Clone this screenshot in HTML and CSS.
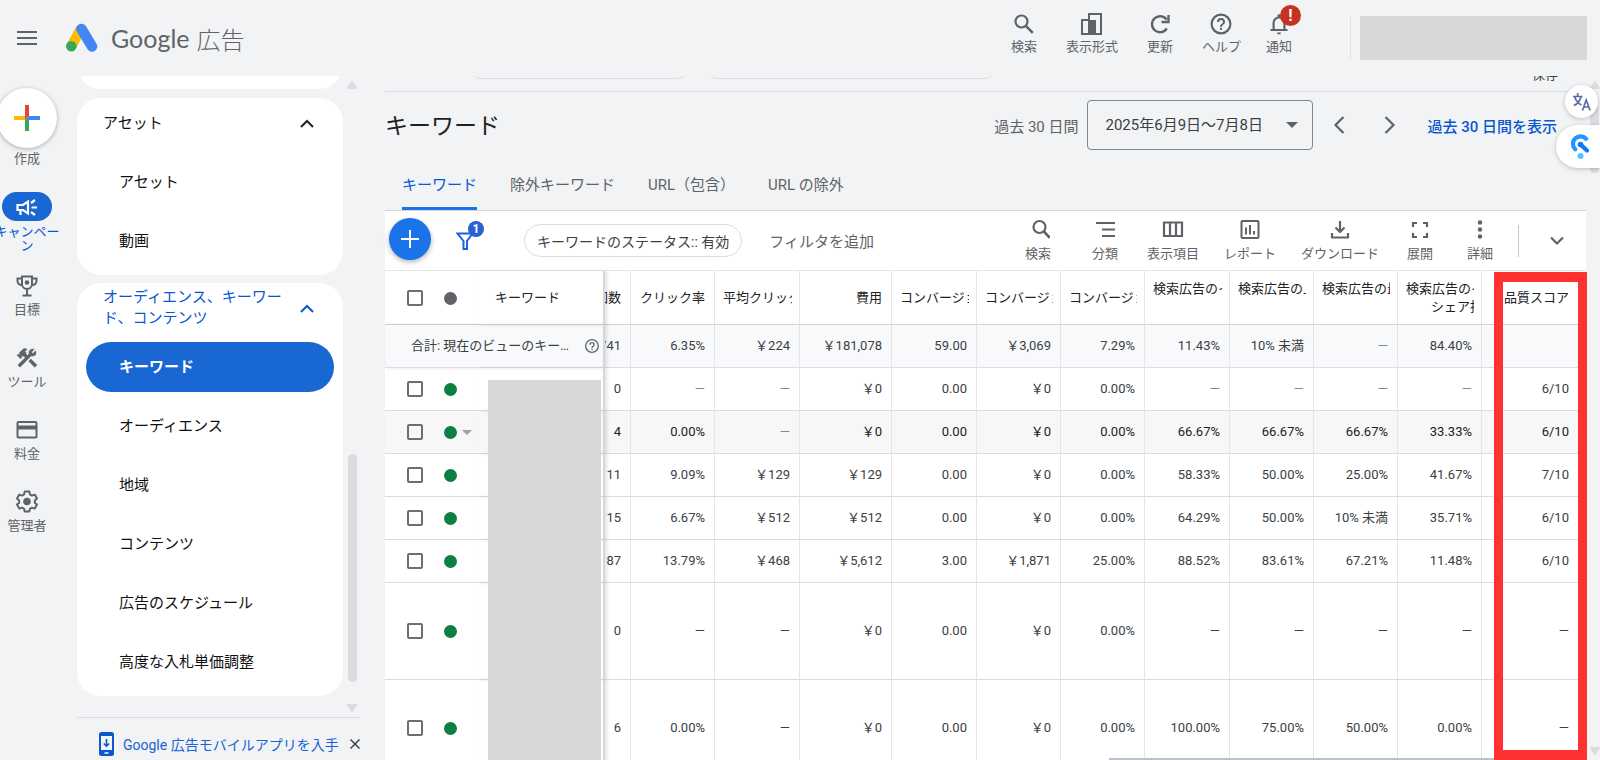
FILE: index.html
```
<!DOCTYPE html>
<html lang="ja">
<head>
<meta charset="utf-8">
<title>キーワード - Google 広告</title>
<link rel="stylesheet" href="styles.css">
</head>
<body>
<header class="topbar">
  <button class="icon-btn menu-btn" aria-label="メニュー"><svg width="20" height="14" viewBox="0 0 20 14"><path d="M0 1h20M0 7h20M0 13h20" stroke="#5f6368" stroke-width="2"/></svg></button>
  <a class="brand" href="#">
    <svg width="32" height="30" viewBox="0 0 32 30"><path d="M15 5.500 5.500 23" stroke="#fbbc04" stroke-width="10"/><path d="M15.500 6 26 23.500" stroke="#4285f4" stroke-width="10.500" stroke-linecap="round"/><circle cx="5.300" cy="23.300" r="5.300" fill="#34a853"/></svg>
    <span class="brand-name">Google</span><span class="brand-ads">広告</span>
  </a>
  <nav class="top-tools">
    <button class="tool"><svg width="24" height="24" viewBox="0 0 24 24"><circle cx="9.500" cy="9.500" r="6" fill="none" stroke="#5f6368" stroke-width="2.200"/><path d="m13.800 13.800 7 7" stroke="#5f6368" stroke-width="2.600"/></svg>検索</button>
    <button class="tool"><svg width="24" height="24" viewBox="0 0 24 24"><path d="M9 8V2h12v20H2V8z" fill="none" stroke="#5f6368" stroke-width="2"/><path d="M8 8h8v14H8z" fill="#5f6368"/></svg>表示形式</button>
    <button class="tool"><svg width="24" height="24" viewBox="0 0 24 24"><path d="M18.800 16.500A8 8 0 1 1 18.500 7.500M20.500 3v7h-7" fill="none" stroke="#5f6368" stroke-width="2.400"/></svg>更新</button>
    <button class="tool"><svg width="24" height="24" viewBox="0 0 24 24" fill="#5f6368"><path d="M11 18h2v-2h-2zM12 1.500a10.500 10.500 0 1 0 0 21 10.500 10.500 0 0 0 0-21m0 18.800a8.300 8.300 0 1 1 0-16.600 8.300 8.300 0 0 1 0 16.600M12 6a4 4 0 0 0-4 4h2a2 2 0 1 1 4 0c0 2-3 1.750-3 5h2c0-2.250 3-2.500 3-5a4 4 0 0 0-4-4"/></svg>ヘルプ</button>
    <button class="tool tool-bell"><svg width="24" height="24" viewBox="0 0 24 24" fill="#5f6368"><path d="M12 22.500a2 2 0 0 0 2-2h-4a2 2 0 0 0 2 2M18.500 17v-6c0-3.070-1.900-5.640-5-6.320V3.500a1.500 1.500 0 0 0-3 0v1.180c-3.100.680-5 3.250-5 6.320v6H3.500v2h17v-2zm-2.200 0H7.700v-6c0-2.480 1.810-4.500 4.300-4.500s4.300 2.020 4.300 4.500z"/></svg>通知<span class="alert-badge">!</span></button>
  </nav>
  <div class="account"></div>
</header>
<div class="body">
  <nav class="rail">
    <button class="create"><span class="create-circle"><svg width="26" height="26" viewBox="0 0 26 26"><path d="M11 0h4v11l-4 4z" fill="#ea4335"/><path d="M0 11h11v4H0z" fill="#fbbc04"/><path d="M11 15l4-4h11v4H15z" fill="#4285f4"/><path d="M11 15h4v11h-4z" fill="#34a853"/></svg></span>作成</button>
    <a class="rail-item rail-on" href="#"><span class="rail-pill"><svg width="24" height="22" viewBox="0 0 24 22" fill="none" stroke="#fff" stroke-width="2.200"><path d="M2.500 9v5H8l5 3.500v-12L8 9zM5.500 14v5M16.500 11.500H22M16 7l4-3M16 16l4 3"/></svg></span>キャンペーン</a>
    <a class="rail-item" href="#"><svg width="24" height="24" viewBox="0 0 24 24" fill="none" stroke="#5f6368" stroke-width="2"><path d="M7 2.500h10V10a5 5 0 0 1-10 0zM7 4.500H2.500V7A4 4 0 0 0 7 11M17 4.500h4.500V7a4 4 0 0 1-4.500 4M12 15v6M7.500 21.500h9"/><circle cx="12" cy="8.500" r="2.300" fill="#5f6368" stroke="none"/></svg>目標</a>
    <a class="rail-item" href="#"><svg width="24" height="24" viewBox="0 0 24 24" fill="#5f6368"><path d="m13.780 15.170 2.120-2.120 6 6-2.120 2.120zM17.500 10a3.500 3.500 0 0 0 3.500-3.500c0-.580-.160-1.120-.410-1.600l-2.700 2.700-1.490-1.490 2.700-2.700A3.500 3.500 0 0 0 14 6.500c0 .410.080.800.210 1.160l-1.850 1.850-1.780-1.780.710-.710-1.410-1.410L12 3.490a3 3 0 0 0-4.240 0L4.220 7.030l1.410 1.410H2.810L2.100 9.150l3.540 3.540.710-.710V9.150l1.410 1.410.710-.710 1.780 1.780-7.410 7.410 2.120 2.120L16.340 9.790c.360.130.750.210 1.160.210" stroke="#5f6368" stroke-width=".6"/></svg>ツール</a>
    <a class="rail-item" href="#"><svg width="24" height="24" viewBox="0 0 24 24"><rect x="2.500" y="4" width="19" height="15.500" rx="1" fill="none" stroke="#5f6368" stroke-width="2"/><path d="M2 7.500h20v4H2z" fill="#5f6368"/></svg>料金</a>
    <a class="rail-item" href="#"><svg width="24" height="24" viewBox="0 0 24 24"><path d="M9.700 1.500h4.600l.6 2.900 2 1.200 2.800-1 2.300 4-2.200 1.900v2.200l2.200 1.900-2.300 4-2.800-1-2 1.200-.6 2.700H9.700l-.6-2.700-2-1.200-2.800 1-2.300-4 2.200-1.900v-2.200L2 8.600l2.300-4 2.800 1 2-1.200z" fill="none" stroke="#5f6368" stroke-width="2" stroke-linejoin="round"/><circle cx="12" cy="11.500" r="3.800" fill="#5f6368"/></svg>管理者</a>
  </nav>
  <div class="side">
    <div class="side-scroll">
      <div class="cards">
        <div class="card card-prev"></div>
        <section class="card">
          <button class="card-head">アセット<svg width="14" height="9" viewBox="0 0 14 9"><path d="m1 8 6-6 6 6" fill="none" stroke="#202124" stroke-width="2"/></svg></button>
          <a class="item" href="#">アセット</a>
          <a class="item" href="#">動画</a>
        </section>
        <section class="card">
          <button class="card-head head-on"><span>オーディエンス、キーワード、コンテンツ</span><svg width="14" height="9" viewBox="0 0 14 9"><path d="m1 8 6-6 6 6" fill="none" stroke="#0b57d0" stroke-width="2"/></svg></button>
          <a class="item item-on" href="#">キーワード</a>
          <a class="item" href="#">オーディエンス</a>
          <a class="item" href="#">地域</a>
          <a class="item" href="#">コンテンツ</a>
          <a class="item" href="#">広告のスケジュール</a>
          <a class="item" href="#">高度な入札単価調整</a>
        </section>
      </div>
      <div class="bar"><svg width="10" height="8" viewBox="0 0 10 8"><path d="M5 1 9 7H1z" fill="#dadce0" stroke="#dadce0" stroke-width="2" stroke-linejoin="round"/></svg><span class="thumb"></span><svg width="10" height="8" viewBox="0 0 10 8"><path d="M5 7 9 1H1z" fill="#dadce0" stroke="#dadce0" stroke-width="2" stroke-linejoin="round"/></svg></div>
    </div>
    <div class="promo">
      <svg width="15" height="24" viewBox="0 0 15 24"><rect width="15" height="24" rx="2.500" fill="#0b57d0"/><path d="M2 4h11v14H2z" fill="#f1f3f4"/><path d="M7.500 7v7M4.800 11.500l2.700 2.700 2.700-2.700" fill="none" stroke="#0b57d0" stroke-width="1.600"/><path d="M5.500 21h4" stroke="#fff" stroke-width="1.500"/></svg>
      <a href="#">Google 広告モバイルアプリを入手</a>
      <button class="icon-btn" aria-label="閉じる"><svg width="10" height="10" viewBox="0 0 10 10"><path d="m.5.5 9 9m0-9-9 9" stroke="#3c4043" stroke-width="1.500"/></svg></button>
    </div>
  </div>
  <main class="main">
    <div class="strip"><span class="ghost ghost-a"></span><span class="ghost ghost-b"></span><a class="save" href="#">保存</a></div>
    <div class="title-row">
      <h1>キーワード</h1>
      <label class="period" for="range">過去 30 日間</label>
      <div class="range"><select id="range"><option>2025年6月9日～7月8日</option></select><svg width="12" height="6" viewBox="0 0 12 6"><path d="M0 0h12L6 6z" fill="#5f6368"/></svg></div>
      <button class="icon-btn step" aria-label="前へ"><svg width="12" height="18" viewBox="0 0 12 18"><path d="M10.500 1 2.500 9l8 8" fill="none" stroke="#5f6368" stroke-width="2.200"/></svg></button>
      <button class="icon-btn step step-next" aria-label="次へ"><svg width="12" height="18" viewBox="0 0 12 18"><path d="m1.500 1 8 8-8 8" fill="none" stroke="#5f6368" stroke-width="2.200"/></svg></button>
      <a class="show" href="#">過去 30 日間を表示</a>
    </div>
    <nav class="tabs"><a class="tab tab-on" href="#">キーワード</a><a class="tab" href="#">除外キーワード</a><a class="tab" href="#">URL（包含）</a><a class="tab" href="#">URL の除外</a></nav>
    <div class="toolbar">
      <button class="fab" aria-label="追加"><svg width="18" height="18" viewBox="0 0 18 18"><path d="M9 0v18M0 9h18" stroke="#fff" stroke-width="2"/></svg></button>
      <button class="filter" aria-label="フィルタ"><svg width="18" height="18" viewBox="0 0 18 18"><path d="M1.500 1.500h15L11 9v8H7.500V9z" fill="none" stroke="#1a62e0" stroke-width="2"/></svg><span class="count">1</span></button>
      <button class="chip">キーワードのステータス:: 有効</button>
      <button class="add-filter">フィルタを追加</button>
      <div class="table-tools">
        <button class="tool tool-search"><svg width="24" height="24" viewBox="0 0 24 24"><circle cx="13.500" cy="9" r="6" fill="none" stroke="#5f6368" stroke-width="2.200"/><path d="m17.800 13.400 6 6.400" stroke="#5f6368" stroke-width="2.600"/></svg>検索</button>
        <button class="tool tool-segment"><svg width="24" height="24" viewBox="0 0 24 24"><path d="M3 5h19M9 11.500h13M9 18h13" stroke="#5f6368" stroke-width="2"/></svg>分類</button>
        <button class="tool"><svg width="24" height="24" viewBox="0 0 24 24"><path d="M3 4.500h18v13.500H3zM9 4v14M15 4v14" fill="none" stroke="#5f6368" stroke-width="2.200"/></svg>表示項目</button>
        <button class="tool"><svg width="24" height="24" viewBox="0 0 24 24"><rect x="3.500" y="3" width="17" height="17" rx="1" fill="none" stroke="#5f6368" stroke-width="2"/><path d="M8 9.500v7M12 7v9.500M16 13v3.500" stroke="#5f6368" stroke-width="2"/></svg>レポート</button>
        <button class="tool"><svg width="24" height="24" viewBox="0 0 24 24"><path d="M12 3v11M7.500 9.500 12 14l4.500-4.500M4 15v4.500h16V15" fill="none" stroke="#5f6368" stroke-width="2.200"/></svg>ダウンロード</button>
        <button class="tool tool-expand"><svg width="24" height="24" viewBox="0 0 24 24"><path d="M5 9V5h4M15 5h4v4M19 15v4h-4M9 19H5v-4" fill="none" stroke="#5f6368" stroke-width="2.200"/></svg>展開</button>
        <button class="tool tool-more"><svg width="24" height="24" viewBox="0 0 24 24" fill="#5f6368"><circle cx="12" cy="4.500" r="2.200"/><circle cx="12" cy="11.500" r="2.200"/><circle cx="12" cy="18.500" r="2.200"/></svg>詳細</button>
      </div>
      <span class="rule"></span>
      <button class="icon-btn collapse" aria-label="折りたたむ"><svg width="14" height="10" viewBox="0 0 14 10"><path d="m1 1.500 6 6 6-6" fill="none" stroke="#5f6368" stroke-width="2.200"/></svg></button>
    </div>
    <div class="grid">
      <table>
        <colgroup><col class="w44"><col class="w50"><col class="w126"><col class="w26"><col class="w84"><col class="w85"><col class="w92"><col class="w85"><col class="w84"><col class="w84"><col class="w85"><col class="w84"><col class="w84"><col class="w84"><col></colgroup>
        <thead>
          <tr>
            <th class="box"><input type="checkbox" aria-label="すべて選択"></th><th class="state"><i class="dot dot-gray"></i></th><th class="kw">キーワード</th>
            <th class="n cut"><div>回数</div></th><th class="n">クリック率</th><th class="n"><div class="clip">平均クリック</div></th><th class="n">費用</th>
            <th class="n"><div class="clip">コンバージョン</div></th><th class="n"><div class="clip">コンバージョン</div></th><th class="n"><div class="clip">コンバージョン</div></th>
            <th class="n two"><div class="clip">検索広告のイ</div></th><th class="n two"><div class="clip">検索広告の上</div></th><th class="n two"><div class="clip">検索広告の最</div></th><th class="n two"><div class="clip">検索広告のイ<div class="second">シェア損</div></div></th><th class="n">品質スコア</th>
          </tr>
        </thead>
        <tbody>
          <tr class="total"><td class="kw sum" colspan="3"><div><span>合計: 現在のビューのキー…</span><svg width="16" height="16" viewBox="0 0 24 24" fill="#5f6368"><path d="M11 18h2v-2h-2zM12 1.500a10.500 10.500 0 1 0 0 21 10.500 10.500 0 0 0 0-21m0 19a8.500 8.500 0 1 1 0-17 8.500 8.500 0 0 1 0 17M12 6a4 4 0 0 0-4 4h2a2 2 0 1 1 4 0c0 2-3 1.750-3 5h2c0-2.250 3-2.500 3-5a4 4 0 0 0-4-4"/></svg></div></td><td class="n cut"><div>741</div></td><td class="n">6.35%</td><td class="n">￥224</td><td class="n">￥181,078</td><td class="n">59.00</td><td class="n">￥3,069</td><td class="n">7.29%</td><td class="n">11.43%</td><td class="n">10% 未満</td><td class="n no">—</td><td class="n">84.40%</td><td class="n"></td></tr>
          <tr><td class="box"><input type="checkbox" aria-label="行を選択"></td><td class="state"><i class="dot"></i></td><td class="kw"></td><td class="n cut"><div>0</div></td><td class="n no">—</td><td class="n no">—</td><td class="n">￥0</td><td class="n">0.00</td><td class="n">￥0</td><td class="n">0.00%</td><td class="n no">—</td><td class="n no">—</td><td class="n no">—</td><td class="n no">—</td><td class="n">6/10</td></tr>
          <tr class="hover"><td class="box"><input type="checkbox" aria-label="行を選択"></td><td class="state"><i class="dot"></i><svg class="caret" width="10" height="5" viewBox="0 0 10 5"><path d="M0 0h10L5 5z" fill="#9aa0a6"/></svg></td><td class="kw"></td><td class="n cut"><div>4</div></td><td class="n">0.00%</td><td class="n no">—</td><td class="n">￥0</td><td class="n">0.00</td><td class="n">￥0</td><td class="n">0.00%</td><td class="n">66.67%</td><td class="n">66.67%</td><td class="n">66.67%</td><td class="n">33.33%</td><td class="n">6/10</td></tr>
          <tr><td class="box"><input type="checkbox" aria-label="行を選択"></td><td class="state"><i class="dot"></i></td><td class="kw"></td><td class="n cut"><div>11</div></td><td class="n">9.09%</td><td class="n">￥129</td><td class="n">￥129</td><td class="n">0.00</td><td class="n">￥0</td><td class="n">0.00%</td><td class="n">58.33%</td><td class="n">50.00%</td><td class="n">25.00%</td><td class="n">41.67%</td><td class="n">7/10</td></tr>
          <tr><td class="box"><input type="checkbox" aria-label="行を選択"></td><td class="state"><i class="dot"></i></td><td class="kw"></td><td class="n cut"><div>15</div></td><td class="n">6.67%</td><td class="n">￥512</td><td class="n">￥512</td><td class="n">0.00</td><td class="n">￥0</td><td class="n">0.00%</td><td class="n">64.29%</td><td class="n">50.00%</td><td class="n">10% 未満</td><td class="n">35.71%</td><td class="n">6/10</td></tr>
          <tr><td class="box"><input type="checkbox" aria-label="行を選択"></td><td class="state"><i class="dot"></i></td><td class="kw"></td><td class="n cut"><div>87</div></td><td class="n">13.79%</td><td class="n">￥468</td><td class="n">￥5,612</td><td class="n">3.00</td><td class="n">￥1,871</td><td class="n">25.00%</td><td class="n">88.52%</td><td class="n">83.61%</td><td class="n">67.21%</td><td class="n">11.48%</td><td class="n">6/10</td></tr>
          <tr class="tall"><td class="box"><input type="checkbox" aria-label="行を選択"></td><td class="state"><i class="dot"></i></td><td class="kw"></td><td class="n cut"><div>0</div></td><td class="n">—</td><td class="n">—</td><td class="n">￥0</td><td class="n">0.00</td><td class="n">￥0</td><td class="n">0.00%</td><td class="n">—</td><td class="n">—</td><td class="n">—</td><td class="n">—</td><td class="n">—</td></tr>
          <tr class="tall"><td class="box"><input type="checkbox" aria-label="行を選択"></td><td class="state"><i class="dot"></i></td><td class="kw"></td><td class="n cut"><div>6</div></td><td class="n">0.00%</td><td class="n">—</td><td class="n">￥0</td><td class="n">0.00</td><td class="n">￥0</td><td class="n">0.00%</td><td class="n">100.00%</td><td class="n">75.00%</td><td class="n">50.00%</td><td class="n">0.00%</td><td class="n">—</td></tr>
        </tbody>
      </table>
      <div class="mask"></div>
      <div class="hbar"></div>
      <div class="highlight"></div>
    </div>
  </main>
  <div class="bar page-bar"><svg width="10" height="8" viewBox="0 0 10 8"><path d="M5 1 9 7H1z" fill="#dadce0" stroke="#dadce0" stroke-width="2" stroke-linejoin="round"/></svg><span class="thumb"></span><svg width="10" height="8" viewBox="0 0 10 8"><path d="M5 7 9 1H1z" fill="#dadce0" stroke="#dadce0" stroke-width="2" stroke-linejoin="round"/></svg></div>
</div>
<div class="floaters">
  <button class="translate" aria-label="翻訳"><svg width="18" height="18" viewBox="0 0 18 18" fill="none" stroke="#5c6bab" stroke-width="1.700"><path d="M0 3.500h9.500M4.700 0v3.500M7.800 4C7 8 4.500 11 .8 12.500M1.800 4c1 3.500 3.500 6.500 6.700 8M9.500 17.500l3.700-10.500 4 10.500M10.800 14h5"/></svg></button>
  <button class="assist" aria-label="アシスタント"><svg width="20" height="26" viewBox="0 0 20 26"><path d="M16 4.800A7.500 7.500 0 0 0 3 10c0 2.200.8 4 2.200 5.300" fill="none" stroke="#2196ff" stroke-width="4.200" stroke-linecap="round"/><path d="M11 11 17 16.500" stroke="#1473ff" stroke-width="4.200" stroke-linecap="round"/><circle cx="10.500" cy="10.500" r="2.800" fill="#1473ff"/><circle cx="10.500" cy="22" r="3" fill="#4fc3ff"/></svg></button>
</div>
</body>
</html>
```
FILE: styles.css
```
* { box-sizing: border-box; }
body {
  margin: 0;
  height: 100vh;
  display: flex;
  flex-direction: column;
  overflow: hidden;
  background: #f1f3f4;
  color: #3c4043;
  font-family: Roboto, "Noto Sans CJK JP", sans-serif;
  font-size: 13px;
}
button { margin: 0; padding: 0; border: 0; background: none; font: inherit; color: inherit; cursor: pointer; }
a { color: inherit; text-decoration: none; }
svg { flex: none; display: block; }
.icon-btn { display: flex; align-items: center; justify-content: center; }

/* top bar */
.topbar { flex: none; height: 76px; display: flex; align-items: center; padding: 0 13px 0 17px; }
.menu-btn { width: 20px; }
.brand { display: flex; align-items: center; margin-left: 29px; color: #5f6368; }
.brand-name { margin-left: 13px; font-family: Lato, sans-serif; font-size: 25px; }
.brand-ads { margin-left: 7px; font-size: 24px; font-weight: 300; }
.top-tools { margin-left: auto; display: flex; gap: 29px; align-self: flex-start; padding-top: 12px; }
.tool { position: relative; display: flex; flex-direction: column; align-items: center; gap: 1px; line-height: 20px; color: #5f6368; white-space: nowrap; }
.top-tools .tool-bell { margin-left: -4px; }
.alert-badge {
  position: absolute; left: 14px; top: -7px; width: 21px; height: 21px; border-radius: 50%;
  background: #c5321f; color: #fff; font-size: 16px; font-weight: 700; line-height: 21px; text-align: center;
}
.account { width: 227px; height: 44px; margin-left: 68px; background: #d8d8d8; box-shadow: -9px 0 0 #f1f3f4, -10px 0 0 #e3e5e7; }

/* left rail */
.body { flex: 1; min-height: 0; display: flex; }
.rail { flex: none; width: 68px; margin-left: -7px; margin-right: 16px; padding-top: 12px; display: flex; flex-direction: column; align-items: center; color: #5f6368; }
.create { display: flex; flex-direction: column; align-items: center; gap: 1px; line-height: 20px; }
.create-circle { width: 60px; height: 60px; border-radius: 50%; background: #fff; display: flex; align-items: center; justify-content: center; box-shadow: 0 1px 4px rgba(60, 64, 67, .4); }
.rail-item { width: 68px; height: 72px; display: flex; flex-direction: column; align-items: center; gap: 2px; line-height: 20px; text-align: center; }
.rail-on { height: 82px; margin-top: 23px; gap: 4px; line-height: 14px; color: #0b57d0; }
.rail-pill { width: 50px; height: 29px; border-radius: 15px; background: #1967d2; display: flex; align-items: center; justify-content: center; }

/* side navigation */
.side { flex: none; width: 308px; display: flex; flex-direction: column; color: #111; font-size: 15px; }
.side-scroll { flex: 1; min-height: 0; overflow: hidden; display: flex; gap: 3px; width: 283px; border-bottom: 1px solid #dadce0; }
.cards { flex: none; width: 266px; display: flex; flex-direction: column; gap: 8px; }
.card { flex: none; background: #fff; border-radius: 24px; padding: 0 9px 9px; }
.card-prev { height: 50px; margin: -37px 0 1px; }
.card-head { width: 100%; height: 50px; padding: 0 20px 0 17px; display: flex; align-items: center; justify-content: space-between; text-align: left; line-height: 21px; }
.card-head span { width: 182px; }
.head-on { color: #0b57d0; }
.item { display: flex; align-items: center; height: 50px; margin-top: 9px; padding: 0 0 3px 33px; border-radius: 25px; }
.item-on { background: #1967d2; color: #fff; font-weight: 700; }
.bar { width: 12px; padding: 5px 0 5px; display: flex; flex-direction: column; align-items: center; }
.bar .thumb { width: 9px; height: 228px; margin: auto 0 22px; border-radius: 5px; background: #dadce0; }
.promo { flex: none; height: 42px; width: 283px; padding: 9px 0 0 22px; display: flex; align-items: center; color: #1a62d6; font-size: 14px; }
.promo a { margin-left: 9px; white-space: nowrap; }
.promo .icon-btn { margin-left: auto; }

/* page heading */
.main { flex: 1; min-width: 0; display: flex; flex-direction: column; }
.strip { flex: none; height: 16px; overflow: hidden; display: flex; border-bottom: 1px solid #dadce0; }
.ghost { height: 32px; margin-top: -29px; border: 1px solid #dadce0; border-radius: 12px; }
.ghost-a { width: 220px; margin-left: 84px; }
.ghost-b { width: 290px; margin-left: 17px; }
.save { margin: -11px 28px 0 auto; line-height: 20px; }
.title-row { flex: none; height: 68px; display: flex; align-items: center; padding: 0 29px 2px 0; font-size: 15px; }
h1 { margin: 0 auto 3px 0; color: #202124; font-size: 23px; font-weight: 400; }
.period { color: #5f6368; }
.range { display: grid; align-items: center; width: 226px; margin-left: 9px; }
.range select { grid-area: 1 / 1; height: 50px; padding: 0 17px; appearance: none; border: 1px solid #80868b; border-radius: 4px; background: none; color: #3c4043; font: inherit; }
.range svg { grid-area: 1 / 1; justify-self: end; margin-right: 15px; pointer-events: none; }
.step { width: 24px; height: 24px; margin-left: 14px; }
.step-next { margin-left: 27px; }
.show { margin-left: 25px; color: #0b57d0; font-weight: 500; }
.tabs { flex: none; height: 51px; display: flex; gap: 33px; padding-left: 17px; border-bottom: 1px solid #d3d5d9; color: #5f6368; font-size: 15px; line-height: 50px; }
.tab-on { color: #0b57d0; box-shadow: inset 0 -3px 0 #1a73e8; }

/* toolbar */
.toolbar { flex: none; height: 60px; display: flex; align-items: center; padding: 0 22px 0 4px; background: #fff; border-bottom: 1px solid #e3e5e8; color: #5f6368; }
.fab { width: 42px; height: 42px; margin-bottom: 3px; border-radius: 50%; background: #1a73e8; display: flex; align-items: center; justify-content: center; box-shadow: 0 2px 5px rgba(60, 64, 67, .4); }
.filter { position: relative; width: 18px; margin-left: 25px; }
.count { position: absolute; left: 12px; top: -11px; width: 16px; height: 16px; border-radius: 50%; background: #2a62d4; color: #fff; font-size: 12px; font-weight: 700; line-height: 16px; text-align: center; }
.chip { height: 33px; margin-left: 50px; padding: 0 12px; border: 1px solid #dadce0; border-radius: 17px; font-size: 14px; color: #3c4043; white-space: nowrap; }
.add-filter { margin-left: 27px; font-size: 15px; white-space: nowrap; }
.table-tools { margin-left: auto; display: flex; gap: 25px; }
.table-tools .tool { gap: 2px; }
.tool-search { margin-right: 16px; }
.tool-segment { margin-right: 4px; }
.tool-expand { margin: 0 9px 0 3px; }
.rule { width: 1px; height: 32px; margin-left: 25px; background: #c4c7cb; }
.collapse { width: 14px; margin-left: 31px; }

/* keyword table */
.grid { position: relative; flex: 1; min-height: 0; background: #fff; }
.grid table { width: 100%; table-layout: fixed; border-collapse: separate; border-spacing: 0; }
.w26 { width: 26px; }
.w44 { width: 44px; }
.w50 { width: 50px; }
.w84 { width: 84px; }
.w85 { width: 85px; }
.w92 { width: 92px; }
.w126 { width: 126px; }
th, td { height: 43px; padding: 0; border-bottom: 1px solid #dadce0; font-weight: 400; line-height: 18px; white-space: nowrap; }
th { height: 54px; color: #202124; border-bottom-color: #cfd2d6; }
.tall td { height: 97px; }
.n { padding: 0 9px 0 8px; text-align: right; border-right: 1px solid #e3e5e8; }
.n:last-child { padding-right: 17px; border-right: 0; }
.no { color: #80868b; }
.cut { padding-left: 0; }
.cut div { display: flex; justify-content: flex-end; overflow: hidden; }
.clip { margin-right: -2px; overflow: hidden; text-align: left; }
.two { vertical-align: top; padding-top: 9px; }
.second { padding-left: 25px; }
.box { padding-left: 22px; text-align: left; }
.box input { display: block; width: 16px; height: 16px; margin: 0; appearance: none; border: 2px solid #6b6f73; border-radius: 2px; }
.state { padding-left: 15px; text-align: left; }
.dot { display: inline-block; width: 13px; height: 13px; border-radius: 50%; background: #0b8043; vertical-align: middle; }
.dot-gray { background: #5f6368; }
.caret { display: inline-block; margin-left: 5px; vertical-align: middle; }
.kw { position: relative; padding-left: 16px; text-align: left; border-right: 2px solid #d5d7da; box-shadow: 2px 0 3px rgba(60, 64, 67, .15); }
.sum { padding: 0 3px 0 26px; }
.sum div { display: flex; align-items: center; justify-content: space-between; }
.total { background: #f8f9fb; }
.hover { background: #f7f7f7; color: #202124; }
.mask { position: absolute; left: 103px; top: 109px; bottom: 0; width: 113px; background: #d8d8d8; }
.hbar { position: absolute; left: 724px; right: 92px; bottom: 0; height: 2px; background: #bdc1c6; }
.highlight { position: absolute; right: -1px; top: 1px; bottom: 0; width: 93px; border: 10px solid #ff3131; border-width: 10px 9px; }

/* right edge */
.page-bar { flex: none; width: 14px; padding-left: 3px; }
.page-bar .thumb { height: 68px; margin: 16px 0 auto; }
.floaters { position: fixed; right: 0; top: 85px; display: flex; flex-direction: column; align-items: flex-end; gap: 7px; }
.floaters button { display: flex; align-items: center; background: #fff; box-shadow: 0 1px 4px rgba(60, 64, 67, .3); }
.translate { width: 33px; height: 33px; margin-right: 2px; justify-content: center; border-radius: 50%; }
.assist { width: 44px; height: 43px; padding-left: 14px; border-radius: 22px 0 0 22px; }
```
